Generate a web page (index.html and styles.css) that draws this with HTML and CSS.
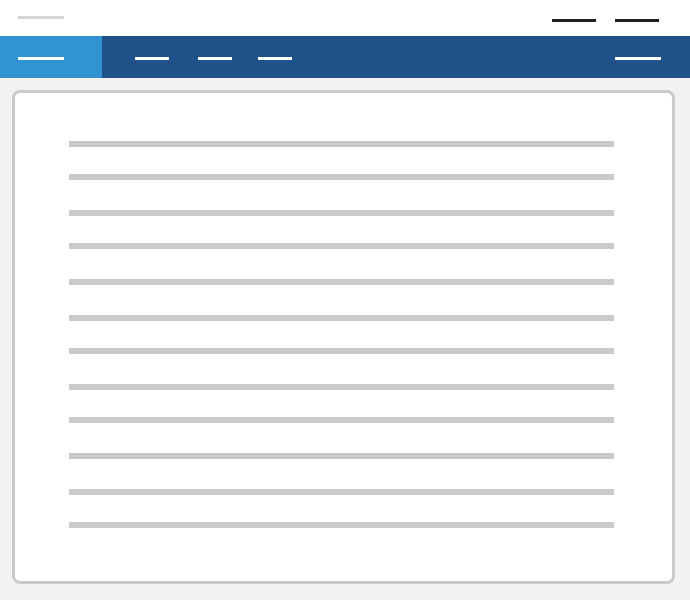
FILE: index.html
```html
<!DOCTYPE html>
<html lang="en">
<head>
<meta charset="utf-8">
<title>Page</title>
<link rel="stylesheet" href="styles.css">
</head>
<body>
  <header class="topbar">
    <span class="logo-line"></span>
    <div class="user-links">
      <span class="dark-line"></span>
      <span class="dark-line"></span>
    </div>
  </header>
  <nav class="navbar">
    <div class="nav-home"><span class="nav-line wide"></span></div>
    <div class="nav-item first"><span class="nav-line"></span></div>
    <div class="nav-item second"><span class="nav-line"></span></div>
    <div class="nav-item third"><span class="nav-line"></span></div>
    <div class="nav-item right"><span class="nav-line wide"></span></div>
  </nav>
  <main class="main">
    <section class="card">
      <div class="text-line"></div>
      <div class="text-line gap-a"></div>
      <div class="text-line gap-b"></div>
      <div class="text-line gap-a"></div>
      <div class="text-line gap-b"></div>
      <div class="text-line gap-b"></div>
      <div class="text-line gap-a"></div>
      <div class="text-line gap-b"></div>
      <div class="text-line gap-a"></div>
      <div class="text-line gap-b"></div>
      <div class="text-line gap-b"></div>
      <div class="text-line gap-a"></div>
    </section>
  </main>
</body>
</html>
```
FILE: styles.css
```css
html, body {
  margin: 0;
  padding: 0;
}
body {
  width: 690px;
  height: 600px;
  background: #f1f2f1;
  font-family: "Liberation Sans", Arial, sans-serif;
  overflow: hidden;
}
.topbar {
  height: 36px;
  background: #ffffff;
  display: flex;
  justify-content: space-between;
  align-items: flex-start;
  padding: 0 31px 0 18px;
  box-sizing: border-box;
}
.logo-line {
  display: block;
  width: 46px;
  height: 3px;
  margin-top: 16px;
  background: #d3d5d3;
}
.user-links {
  display: flex;
  gap: 19px;
  margin-top: 19px;
}
.dark-line {
  display: block;
  width: 44px;
  height: 3px;
  background: #231f20;
}
.navbar {
  height: 42px;
  background: #1f5289;
  display: flex;
  align-items: flex-start;
}
.nav-home {
  width: 102px;
  height: 42px;
  background: #3193d2;
  padding: 21px 0 0 18px;
  box-sizing: border-box;
}
.nav-item {
  padding-top: 21px;
}
.nav-item.first { margin-left: 33px; }
.nav-item.second { margin-left: 29px; }
.nav-item.third { margin-left: 26px; }
.nav-item.right { margin-left: auto; margin-right: 29px; }
.nav-line {
  display: block;
  width: 34px;
  height: 3px;
  background: #ffffff;
}
.nav-line.wide {
  width: 46px;
}
.main {
  padding: 12px 15px 16px 12px;
}
.card {
  background: #ffffff;
  border: 3px solid #c8cbc9;
  border-radius: 8px;
  height: 494px;
  box-sizing: border-box;
  padding: 48px 58px 0 54px;
}
.text-line {
  height: 6px;
  background: #c8cbc9;
}
.text-line.gap-a { margin-top: 27px; }
.text-line.gap-b { margin-top: 30px; }
```
